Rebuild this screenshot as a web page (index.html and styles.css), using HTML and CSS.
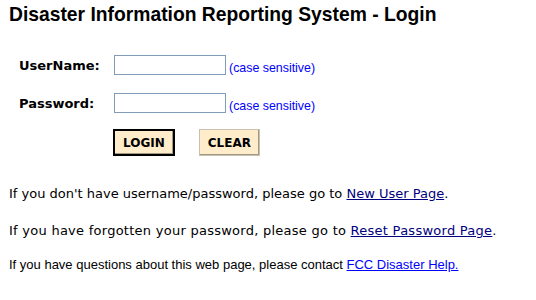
FILE: index.html
```html
<!DOCTYPE html>
<html lang="en">
<head>
    <meta charset="UTF-8">
    <link rel="stylesheet" href="styles.css">
</head>
<body>
    <h1 class="title">Disaster Information Reporting System - Login</h1>

    <form class="login">
        <div class="row">
            <label class="label" for="user">UserName:</label>
            <input class="field" id="user" type="text">
            <span class="hint">(case sensitive)</span>
        </div>
        <div class="row">
            <label class="label" for="pass">Password:</label>
            <input class="field" id="pass" type="password">
            <span class="hint">(case sensitive)</span>
        </div>
        <div class="buttons">
            <button class="btn btn-main" type="button">LOGIN</button>
            <button class="btn" type="button">CLEAR</button>
        </div>
    </form>

    <p class="note first">If you don't have username/password, please go to <a class="visited" href="#">New User Page</a>.</p>
    <p class="note wide">If you have forgotten your password, please go to <a class="visited" href="#">Reset Password Page</a>.</p>
    <p class="note small">If you have questions about this web page, please contact <a href="#">FCC Disaster Help.</a></p>
</body>
</html>
```

FILE: styles.css
```css
body {
    margin: 0;
    padding: 0 9px;
    background-color: #fff;
    color: #000;
    font-family: "DejaVu Sans", Verdana, sans-serif;
}

.title {
    margin: 0;
    padding-top: 3px;
    font-family: "Liberation Sans", Arial, sans-serif;
    font-size: 19.3px;
    font-weight: bold;
    line-height: 23px;
}

.login {
    margin-top: 29px;
}

.row {
    display: flex;
    align-items: center;
    height: 20px;
    margin-bottom: 18px;
}

.label {
    width: 95px;
    padding-left: 10px;
    font-size: 13px;
    font-weight: bold;
}

.field {
    box-sizing: border-box;
    width: 112px;
    height: 20px;
    margin: 0;
    border: 1px solid #7f9db9;
    font-size: 12px;
}

.hint {
    margin-left: 3px;
    margin-top: 6px;
    color: #0000ff;
    font-family: "Liberation Sans", Arial, sans-serif;
    font-size: 12.4px;
}

.buttons {
    display: flex;
    gap: 24px;
    margin-left: 104px;
    margin-top: -2px;
}

.btn {
    height: 27px;
    padding: 0 8px;
    background-color: #feecca;
    border: 1px solid #c8c0b0;
    box-shadow: inset -1px -1px 0 #a09880;
    font-family: "DejaVu Sans", Verdana, sans-serif;
    font-size: 12px;
    font-weight: bold;
    color: #000;
}

.btn-main {
    border: 2px solid #000;
}

.note {
    margin: 0;
    font-size: 13px;
    line-height: 16px;
}

.note.first {
    margin-top: 30px;
}

.note.wide {
    margin-top: 21px;
    letter-spacing: 0.26px;
}

.note.small {
    margin-top: 18px;
    font-family: "Liberation Sans", Arial, sans-serif;
    font-size: 13px;
}

.note a {
    color: #0000ff;
}

.note a.visited {
    color: #000080;
}
```
